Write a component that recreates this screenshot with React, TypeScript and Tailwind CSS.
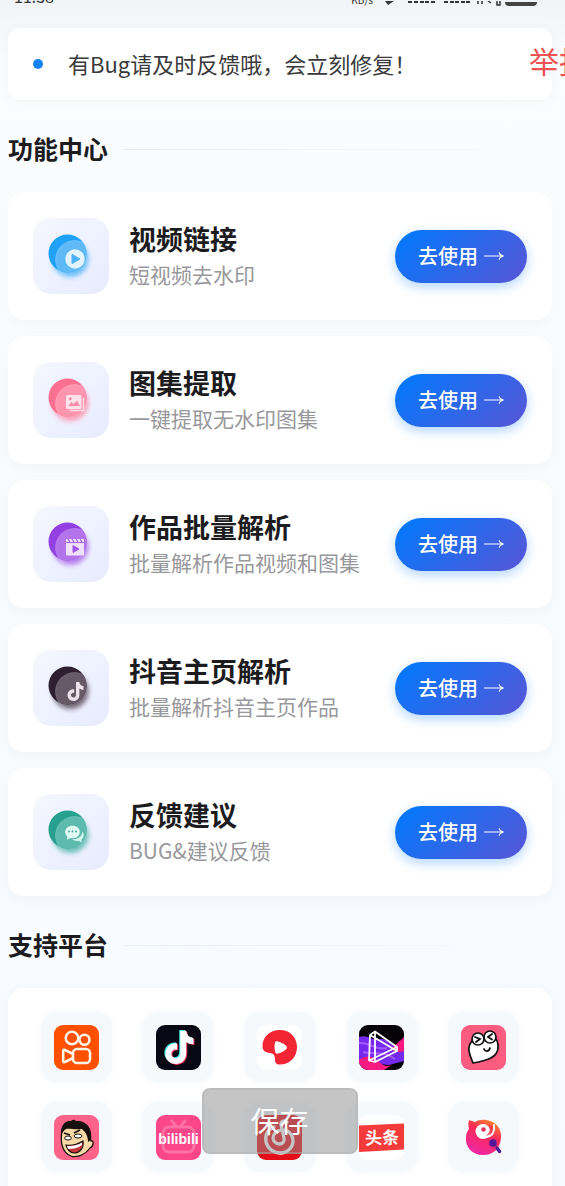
import React from "react";

interface Feature {
    id: string;
    title: string;
    desc: string;
    color: string;
    light: string;
    glyph: React.JSX.Element;
}

const NOTE_PATH = "M11 1h3.400c.3 2.600 1.800 4 4.100 4.200v3.500c-1.600 0-2.900-.5-4.100-1.300v6.300c0 4-2.800 6.300-6 6.300-3.400 0-5.900-2.700-5.900-5.900 0-3.700 3.100-6.300 6.700-5.900v3.600c-1.800-.5-3.300.6-3.300 2.300 0 1.500 1.100 2.500 2.500 2.500 1.600 0 2.600-1.100 2.600-2.900z";

const features: Feature[] = [
    {
        id: "video",
        title: "视频链接",
        desc: "短视频去水印",
        color: "#1ea1f7",
        light: "#55b5f6",
        glyph: (
            <>
                <circle cx="10" cy="10" r="9.700" fill="#e3f4ff" />
                <path d="M7 5.300v9.400l8-4.700z" fill="#4fb1f5" stroke="#4fb1f5" strokeLinejoin="round" />
            </>
        ),
    },
    {
        id: "album",
        title: "图集提取",
        desc: "一键提取无水印图集",
        color: "#fb7090",
        light: "#fd8fa9",
        glyph: (
            <>
                <path d="M18.500 5v12.500H4.500" fill="none" stroke="#ffdfe8" strokeWidth="1.400" />
                <rect x="1" y="2" width="15.500" height="14" rx="1.500" fill="#ffe3ea" />
                <circle cx="5.200" cy="5.800" r="1.500" fill="#fd8ca6" />
                <path d="M3 13l3.500-4 2 2L12 7.500l3 5.500z" fill="#fd8ca6" />
            </>
        ),
    },
    {
        id: "batch",
        title: "作品批量解析",
        desc: "批量解析作品视频和图集",
        color: "#9340e3",
        light: "#ae6bea",
        glyph: (
            <>
                <path d="M1 2h18v15.500a1 1 0 0 1-1 1H2a1 1 0 0 1-1-1z" fill="#f0e2fc" />
                <path d="M1 5.600h18" stroke="#a65de8" strokeWidth="1" />
                <path d="M3 2l2 3M7 2l2 3M11 2l2 3M15 2l2 3" stroke="#a65de8" strokeWidth="1.200" />
                <path d="M8 8.500v7l6-3.500z" fill="#a257e8" stroke="#a257e8" strokeLinejoin="round" />
            </>
        ),
    },
    {
        id: "douyin",
        title: "抖音主页解析",
        desc: "批量解析抖音主页作品",
        color: "#2e2030",
        light: "#5d4f5f",
        glyph: <path d={NOTE_PATH} fill="#eee3ec" />,
    },
    {
        id: "feedback",
        title: "反馈建议",
        desc: "BUG&建议反馈",
        color: "#28a08f",
        light: "#53b7a9",
        glyph: (
            <>
                <path d="M17.500 6.500c2 2.600 1.500 6-1 8l.300 3-3-1.700c-2.500.5-5 0-6.500-1.500 6.500 0 10-3.500 10.200-7.800z" fill="#d6f5ef" />
                <path d="M7.500.8c4.200 0 7.300 2.700 7.300 6.200s-3.100 6.200-7.300 6.200c-.8 0-1.600-.1-2.300-.300L2 14.800l.3-3.300C1 10.400.2 8.800.2 7 .2 3.500 3.300.8 7.500.8z" fill="#e1faf5" />
                <circle cx="4" cy="6.500" r="1" fill="#45ab9c" />
                <circle cx="7.500" cy="6.500" r="1" fill="#45ab9c" />
                <circle cx="11" cy="6.500" r="1" fill="#45ab9c" />
            </>
        ),
    },
];

const platforms: { name: string; logo: React.JSX.Element }[] = [
    {
        name: "快手",
        logo: (
            <>
                <rect width="45" height="45" fill="#ff5000" />
                <g fill="none" stroke="#fff3e8" strokeWidth="2.600">
                    <circle cx="18" cy="13" r="6.300" />
                    <circle cx="30.500" cy="14.700" r="5" />
                    <rect x="19" y="24" width="17" height="14" rx="4" />
                    <path d="M19 29l-8-4c-1.200-.6-1.800 0-1.800 1v10c0 1.200.8 1.600 1.800 1l8-4" strokeLinejoin="round" />
                </g>
            </>
        ),
    },
    {
        name: "抖音",
        logo: (
            <>
                <rect width="45" height="45" fill="#080714" />
                <g transform="translate(5 4) scale(1.750)">
                    <path d={NOTE_PATH} fill="#35e5e0" transform="translate(-.6 -.5)" />
                    <path d={NOTE_PATH} fill="#f5355b" transform="translate(.6 .5)" />
                    <path d={NOTE_PATH} fill="#ffffff" />
                </g>
            </>
        ),
    },
    {
        name: "西瓜视频",
        logo: (
            <>
                <rect width="45" height="45" fill="#ffffff" />
                <path d="M23 5c10 0 17 7.500 17 17 0 10-7 17.500-17 17.500-4 0-5-1.500-5-5 0-3.500-1-6-5-6.500-5-.5-7.500-2.500-7.500-7C5.500 12 12.500 5 23 5z" fill="#f32535" />
                <path d="M18.500 16.500c2-1.500 11.500 3.500 11.500 6 0 2.500-8.500 7-11 6-1.800-2-2-10-.5-12z" fill="#fff" />
            </>
        ),
    },
    {
        name: "微视",
        logo: (
            <>
                <rect width="45" height="45" fill="#050208" />
                <path d="M0 12c8-3 13 4 22 2 8 0 12 8 23 9v13L30 40 0 37z" fill="#7629ee" />
                <path d="M0 18c12-1 16 8 28 5M4 27c10 3 20-2 32 7" stroke="#a45bff" strokeWidth="2" fill="none" />
                <path d="M45 12v14c-5 2-10 1-13-2zM0 35c7-5 13-4 18 0s8 8 15 5l-8 5H0z" fill="#f61982" />
                <path d="M11 10l5-3.500 22 15.500v4L16 37l-6-1.500zM16 6.500V37M11 10l27 16M38 22L10 35.500" fill="none" stroke="#fff" strokeWidth="1.800" strokeLinejoin="round" />
            </>
        ),
    },
    {
        name: "皮皮虾",
        logo: (
            <>
                <rect width="45" height="45" fill="#fc5c80" />
                <path d="M11 16c-6 7-2 14 1 22 12-2 26-5 25-17 0-4-1-6-3-8z" fill="#fff" stroke="#111" strokeWidth="1.700" strokeLinejoin="round" />
                <circle cx="17" cy="14" r="6" fill="#fff" stroke="#111" strokeWidth="1.700" />
                <circle cx="29" cy="12" r="6" fill="#fff" stroke="#111" strokeWidth="1.700" />
                <path d="M14 12l5 2-4 3M31 9l-4 3 4 2.500M23 24c1 3 5 3 6-1" stroke="#111" strokeWidth="1.800" fill="none" strokeLinecap="round" />
            </>
        ),
    },
    {
        name: "皮皮搞笑",
        logo: (
            <>
                <rect width="45" height="45" fill="#fe638a" />
                <path d="M8 16C10 9 17 6 24 7c8 1 12 7 12 15l1 4c3-1 3 5-1 7-4 6-12 10-19 8C8 38 6 26 8 16z" fill="#f9d9a5" stroke="#17100e" strokeWidth="1.300" />
                <path d="M7 20C6 11 11 5 17 6c2-2 4-1 5 0 10-1 17 7 15 19l-3 2c0-7-3-10-6-13-7 1-13-1-16 0-2 1-3 3-5 6z" fill="#17100e" />
                <path d="M10 18l6 2M20 18l6-3" stroke="#17100e" strokeWidth="1.600" />
                <ellipse cx="14" cy="23" rx="3.400" ry="2" fill="#fff" stroke="#17100e" />
                <ellipse cx="24" cy="21" rx="4" ry="2" fill="#fff" stroke="#17100e" />
                <path d="M12 30c6 1 12-1 17-4 1 7-3 12-9 12-4 0-7-4-8-8z" fill="#c93337" stroke="#17100e" strokeWidth="1.200" />
                <path d="M13 31c6 .5 11-1 15-3.500v2.500c-4 3-9 4-14 4z" fill="#fff" />
            </>
        ),
    },
    {
        name: "哔哩哔哩",
        logo: (
            <>
                <rect width="45" height="45" fill="#fb4689" />
                <g stroke="#fd70a4" strokeWidth="3" fill="none" strokeLinecap="round">
                    <rect x="7" y="12" width="31" height="25" rx="6" />
                    <path d="M16 6l4 5M29 6l-4 5" />
                </g>
                <text x="22.500" y="29" textAnchor="middle" fontSize="14" fontWeight="700" fill="#fff" fontFamily="'Liberation Sans', sans-serif">bilibili</text>
            </>
        ),
    },
    {
        name: "网易云音乐",
        logo: (
            <>
                <rect width="45" height="45" fill="#e60e16" />
                <g stroke="#fff" strokeWidth="3.300" fill="none" strokeLinecap="round">
                    <path d="M17 12C10 15 8 21 9 27c2 7 8 11 14 11 8 0 13-6 13-12 0-7-5-11-11-11-5 0-9 4-9 8 0 3 3 6 6 6 4 0 6-3 5-6L24 10c-.5-4 3-5 6-3" />
                </g>
            </>
        ),
    },
    {
        name: "今日头条",
        logo: (
            <>
                <rect width="45" height="45" fill="#ffffff" />
                <path d="M0 10.500l45-2v26L0 37z" fill="#f43b3b" />
                <text x="23" y="29" textAnchor="middle" fontSize="17" fontWeight="700" fill="#fff" transform="rotate(-2 22 22)">头条</text>
            </>
        ),
    },
    {
        name: "全民K歌",
        logo: (
            <>
                <defs>
                    <linearGradient id="bird" x1=".8" y1="0" x2=".3" y2="1">
                        <stop offset="0" stopColor="#fb8a2b" />
                        <stop offset=".4" stopColor="#fb2c58" />
                        <stop offset="1" stopColor="#ee26a8" />
                    </linearGradient>
                </defs>
                <path d="M8 5l6 2c3-2 7-2.500 11-2 10 1 16 9 15 18-1 11-8 17-18 17C11 40 4 32 5 22c.3-4 1.500-6 3-8-.8-3-.8-6 0-9z" fill="url(#bird)" />
                <circle cx="22" cy="16.500" r="7.500" fill="#fff" />
                <path d="M33 10c1 6-1 11-7 12" fill="none" stroke="#fff" strokeWidth="2" strokeLinecap="round" />
                <path d="M27 10c3 4 2 8-2 11 4-1 7-5 6-10z" fill="#fb3a52" />
                <circle cx="22.500" cy="14.500" r="2.200" fill="#e7295c" />
                <path d="M36 33l2.500 3.500" stroke="#4b1d95" strokeWidth="3.500" strokeLinecap="round" />
                <circle cx="32" cy="28" r="3.800" fill="#52179a" />
            </>
        ),
    },
];

function StatusBar() {
    return (
        <header className="flex h-1.5 items-end justify-between overflow-hidden pl-3.5 pr-7 text-[#333]">
            <span className="text-base leading-5">11:38</span>
            <div className="flex items-end gap-3">
                <span className="text-[10px] leading-3">KB/s</span>
                <svg width="10" height="5" viewBox="0 0 10 5" aria-hidden="true">
                    <path d="M0 0h9L3 4z" fill="#333" />
                </svg>
                <svg width="98" height="5" viewBox="0 0 98 5" aria-hidden="true">
                    <path d="M3 0v2M9 0v2M15 0v2M20 0v2M26 0v2M39 0v2M45 0v2M50 0v2M56 0v2M61 0v2" stroke="#333" strokeWidth="4" />
                    <path d="M71 0v3M75 0v3M81 0l3 2M90 0v4h3V0" stroke="#333" strokeWidth="1.500" fill="none" />
                </svg>
                <span className="-ml-3 h-1.5 w-8 rounded-b border-b-4 border-[#444]" />
            </div>
        </header>
    );
}

function SectionTitle({ children }: { children: string }) {
    return (
        <div className="mt-7 mb-5 flex h-11 items-start gap-4">
            <h2 className="text-[25px] leading-10 font-semibold text-[#1c1c1e]">{children}</h2>
            <span className="mt-[21px] h-px flex-1 bg-linear-to-r from-[#e6edf1] to-transparent" />
        </div>
    );
}

function FeatureIcon({ feature }: { feature: Feature }) {
    const blurId = `blur-${feature.id}`;
    const clipId = `clip-${feature.id}`;

    return (
        <div className="size-[76px] shrink-0 rounded-[18px] bg-linear-to-br from-[#f5f8ff] to-[#e8ebff]">
            <svg viewBox="0 0 76 76" className="size-full" aria-hidden="true">
                <defs>
                    <filter id={blurId} x="-40%" y="-40%" width="180%" height="180%">
                        <feGaussianBlur stdDeviation="2.800" />
                    </filter>
                    <clipPath id={clipId}>
                        <circle cx="34.500" cy="35.500" r="19" />
                    </clipPath>
                </defs>
                <circle cx="37.500" cy="41" r="18" fill={feature.light} opacity=".9" filter={`url(#${blurId})`} />
                <circle cx="34.500" cy="35.500" r="19" fill={feature.color} />
                <circle cx="41.500" cy="41.500" r="19" fill={feature.light} clipPath={`url(#${clipId})`} />
                <circle cx="41.500" cy="41.500" r="19" fill="#fff" fillOpacity=".06" stroke="#fff" strokeOpacity=".18" />
                <g transform="translate(32 31)">{feature.glyph}</g>
            </svg>
        </div>
    );
}

function FeatureCard({ feature }: { feature: Feature }) {
    return (
        <li className="flex items-center rounded-2xl bg-white px-[25px] py-[26px] shadow-[0_4px_16px_rgba(0,0,0,0.03)]">
            <FeatureIcon feature={feature} />
            <div className="ml-5 min-w-0 flex-1 pt-0.5 whitespace-nowrap">
                <h3 className="text-[27px] leading-[34px] font-semibold text-[#1c1c1e]">{feature.title}</h3>
                <p className="text-[21px] leading-9 text-[#98989c]">{feature.desc}</p>
            </div>
            <button
                type="button"
                className="flex h-[53px] w-[132px] shrink-0 items-center justify-center gap-1.5 rounded-full bg-linear-135/srgb from-[#007aff] to-[#5856d6] text-xl font-medium text-white shadow-[0_4px_12px_rgba(0,122,255,0.3)]"
            >
                去使用
                <svg width="20" height="10" viewBox="0 0 20 10" aria-hidden="true">
                    <path d="M0 5h18M15 1.500c.6 1.800 1.800 2.900 4 3.500-2.200.6-3.400 1.700-4 3.500" fill="none" stroke="#fff" strokeWidth="1.200" />
                </svg>
            </button>
        </li>
    );
}

export default function App(): React.JSX.Element {
    return (
        <div className="relative flex h-screen flex-col overflow-hidden bg-linear-to-b from-[#f1f4f7] via-[#fafcfd] via-5% to-[#f7fbff] font-['Noto_Sans_CJK_SC',sans-serif]">
            <StatusBar />

            <main className="flex flex-1 flex-col pt-[22px] pr-[13px] pl-2">
                {/* Notice */}
                <div className="flex h-[72px] shrink-0 items-center rounded-xl bg-white pl-[25px] shadow-[0_2px_12px_rgba(0,0,0,0.04)]">
                    <span className="size-2.5 rounded-full bg-[#1683f7]" />
                    <p className="ml-[25px] pb-0.5 text-[22px] whitespace-nowrap text-[#3a3a3c]">有Bug请及时反馈哦，会立刻修复！</p>
                </div>

                <SectionTitle>功能中心</SectionTitle>
                <ul className="flex flex-col gap-4">
                    {features.map((feature) => (
                        <FeatureCard key={feature.id} feature={feature} />
                    ))}
                </ul>

                <SectionTitle>支持平台</SectionTitle>
                <ul className="grid flex-1 grid-cols-5 content-start justify-items-center gap-y-5 rounded-t-2xl bg-white px-[18px] pt-6 shadow-[0_2px_12px_rgba(0,0,0,0.04)]">
                    {platforms.map((platform) => (
                        <li
                            key={platform.name}
                            className="flex size-[70px] items-center justify-center rounded-2xl bg-[#f6f9fc] shadow-[0_0_6px_rgba(240,244,250,0.8)]"
                        >
                            <svg viewBox="0 0 45 45" className={`size-[45px] ${platform.name === "全民K歌" ? "" : "rounded-[9px]"}`} role="img" aria-label={platform.name}>
                                {platform.logo}
                            </svg>
                        </li>
                    ))}
                </ul>
            </main>

            {/* Floating actions */}
            <button type="button" className="absolute top-10 -right-6 text-[30px] leading-10 whitespace-nowrap text-[#ee5253]">
                举报
            </button>
            <button
                type="button"
                className="absolute bottom-8 left-1/2 h-[66px] w-[156px] -translate-x-[81px] rounded-lg border-2 border-[#aeb0b2]/40 bg-[#8c8c8c]/50 text-[29px] text-white"
            >
                保存
            </button>
        </div>
    );
}
